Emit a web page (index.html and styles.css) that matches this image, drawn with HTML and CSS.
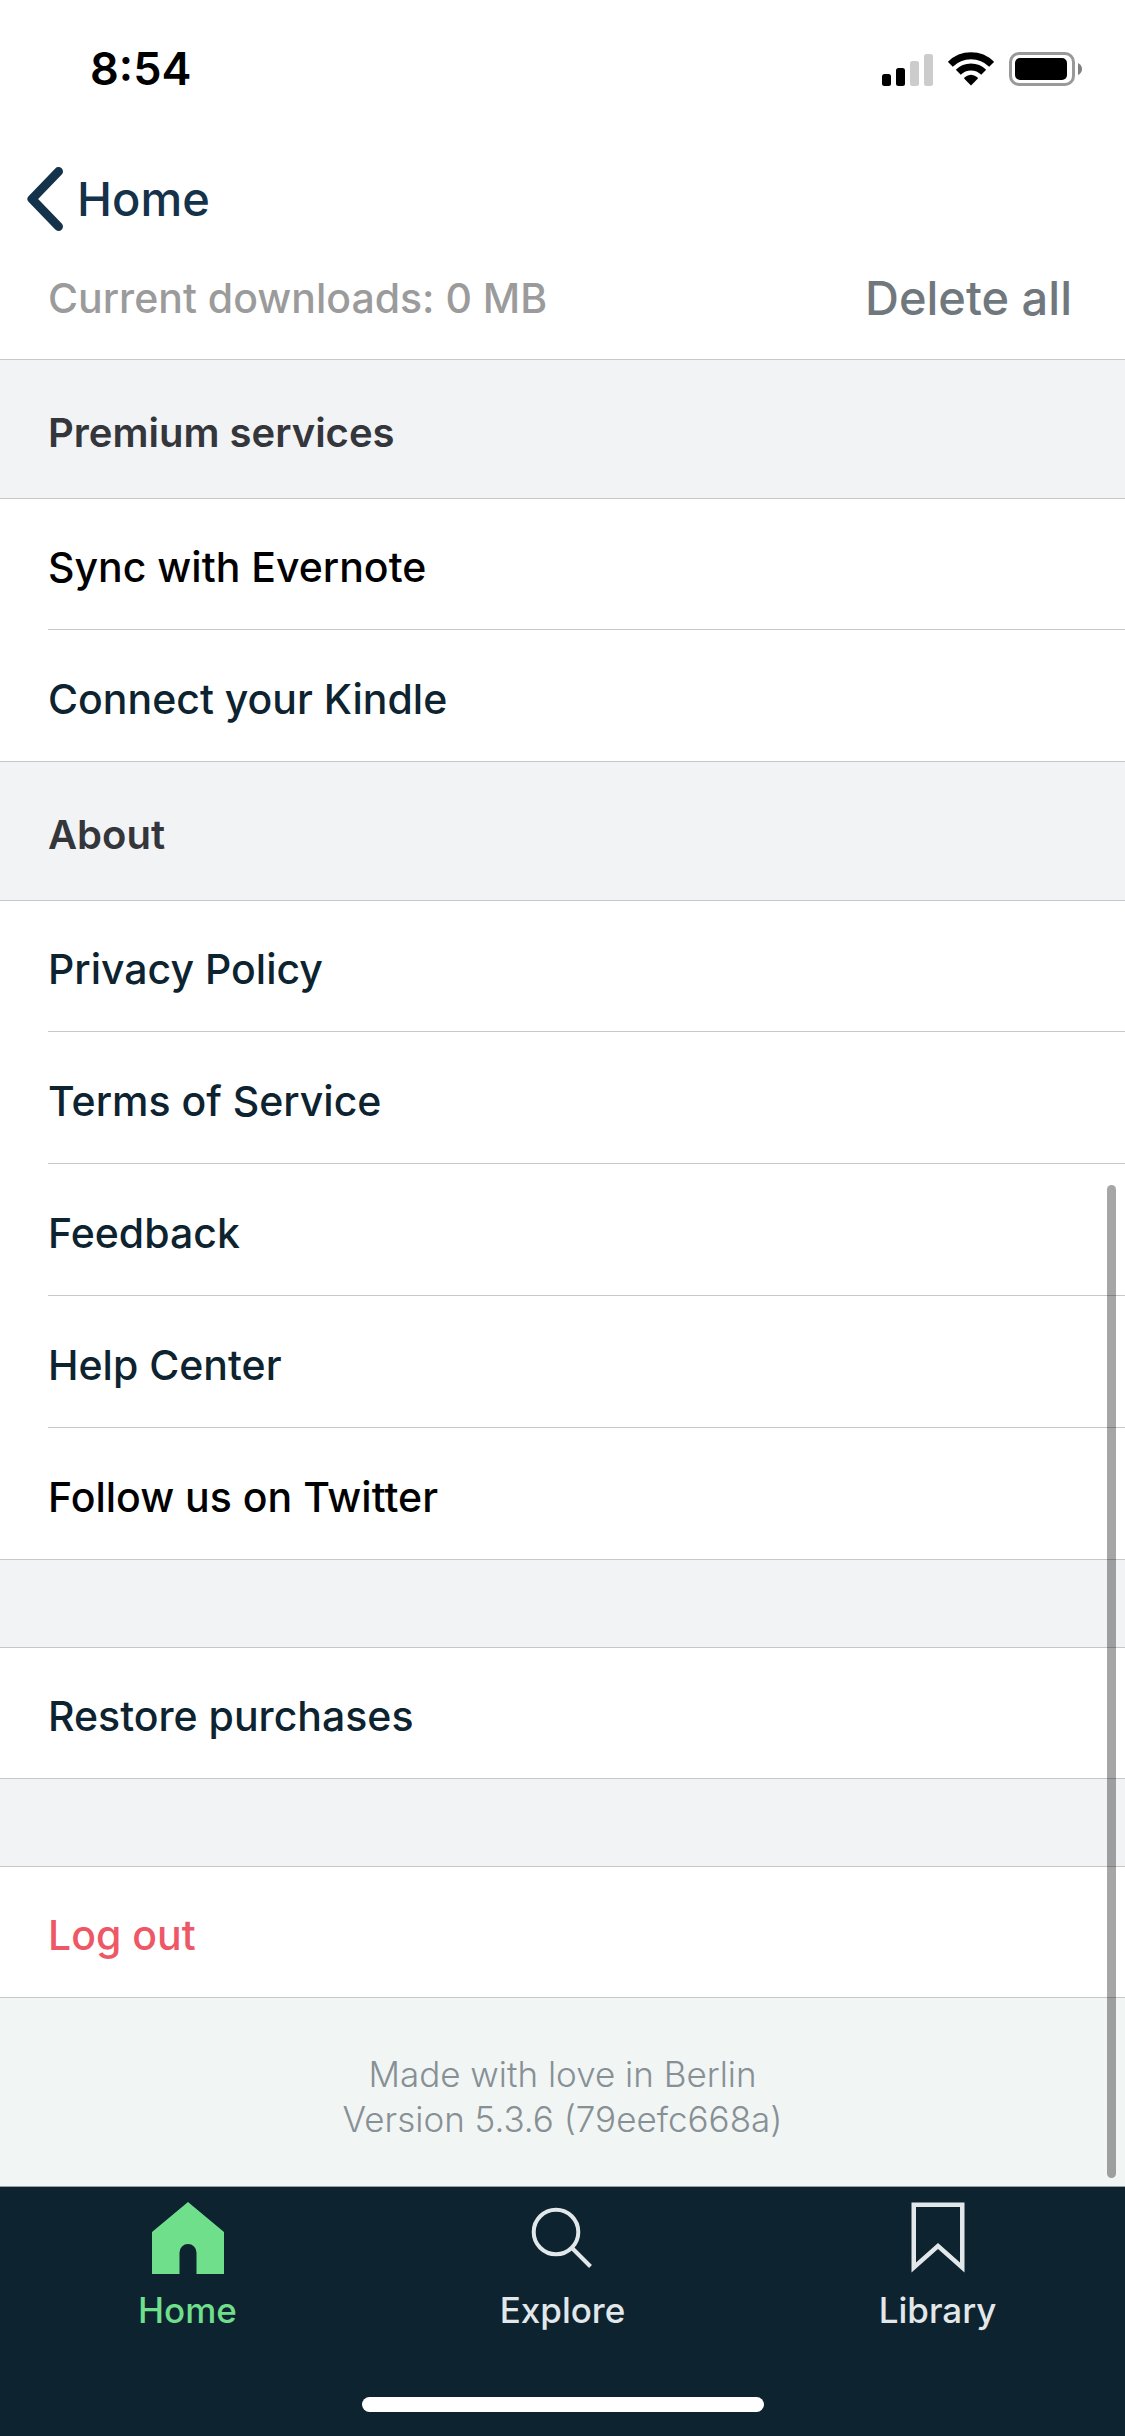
FILE: index.html
```html
<!DOCTYPE html>
<html lang="en">
<head>
  <meta charset="utf-8">
  <meta name="viewport" content="width=device-width, initial-scale=1">
  <title>Settings</title>
  <link rel="stylesheet" href="styles.css">
</head>
<body>
  <div class="status-bar">
    <time class="clock">8:54</time>
    <div class="status-icons">
      <svg class="signal" width="51" height="33" viewBox="0 0 51 33" aria-hidden="true">
        <rect x="0" y="21" width="9" height="12" rx="2.5"/>
        <rect x="14" y="15" width="9" height="18" rx="2.5"/>
        <rect class="dim" x="28" y="8" width="9" height="25" rx="2.5"/>
        <rect class="dim" x="42" y="1" width="9" height="32" rx="2.5"/>
      </svg>
      <svg class="wifi" width="46" height="34" viewBox="0 0 46 34" aria-hidden="true">
        <path class="arc" d="M2.3 12.3A29.3 29.3 0 0 1 43.7 12.3"/>
        <path class="arc" d="M10.3 20.3A18 18 0 0 1 35.7 20.3"/>
        <path d="M23 33.5L16.3 26.8A2 2 0 0 1 16.6 25.2Q23 20.2 29.4 25.2A2 2 0 0 1 29.7 26.8Z"/>
      </svg>
      <svg class="battery" width="74" height="34" viewBox="0 0 74 34" aria-hidden="true">
        <rect class="shell" x="1.5" y="1.5" width="63" height="31" rx="8.5"/>
        <rect x="6" y="6" width="52" height="22" rx="5"/>
        <path class="nub" d="M69 11Q73 13 73 17T69 23Z"/>
      </svg>
    </div>
  </div>

  <header class="nav-bar">
    <a class="back" href="#">
      <svg width="36" height="64" viewBox="0 0 36 64" aria-hidden="true">
        <path d="M31.5 4.5L5 32L31.5 59.5"/>
      </svg>
      Home
    </a>
  </header>

  <main class="settings">
    <div class="downloads">
      <p class="downloads-size">Current downloads: 0 MB</p>
      <button class="delete-all" type="button">Delete all</button>
    </div>

    <h2 class="section-title">Premium services</h2>
    <ul class="group">
      <li><a class="row external" href="#">Sync with Evernote</a></li>
      <li><a class="row" href="#">Connect your Kindle</a></li>
    </ul>

    <h2 class="section-title">About</h2>
    <ul class="group">
      <li><a class="row" href="#">Privacy Policy</a></li>
      <li><a class="row" href="#">Terms of Service</a></li>
      <li><a class="row" href="#">Feedback</a></li>
      <li><a class="row" href="#">Help Center</a></li>
      <li><a class="row external" href="#">Follow us on Twitter</a></li>
    </ul>

    <ul class="group spaced">
      <li><button class="row" type="button">Restore purchases</button></li>
    </ul>

    <ul class="group spaced">
      <li><button class="row danger" type="button">Log out</button></li>
    </ul>

    <footer class="about-app">
      <p>Made with love in Berlin</p>
      <p>Version 5.3.6 (79eefc668a)</p>
    </footer>

    <div class="scroll-thumb"></div>
  </main>

  <nav class="tab-bar">
    <div class="tabs">
      <a class="tab active" href="#" aria-current="page">
        <svg width="72" height="72" viewBox="0 0 72 72" aria-hidden="true">
          <path d="M36 0L72 30V72H44.5V50.500A8.5 8.5 0 0 0 27.5 50.500V72H0V30Z"/>
        </svg>
        Home
      </a>
      <a class="tab" href="#">
        <svg class="outline" width="72" height="72" viewBox="0 0 72 72" aria-hidden="true">
          <circle cx="29" cy="30" r="22.300"/>
          <path d="M45 46L63.500 64.500"/>
        </svg>
        Explore
      </a>
      <a class="tab" href="#">
        <svg width="72" height="72" viewBox="0 0 72 72" aria-hidden="true">
          <path fill-rule="evenodd" d="M9.500 .5H62.500V70.500L36 47L9.500 70.500ZM14 5V60.500L36 41L58 60.500V5Z"/>
        </svg>
        Library
      </a>
    </div>
    <div class="home-indicator"></div>
  </nav>
</body>
</html>
```

FILE: styles.css
```css
* {
  box-sizing: border-box;
  margin: 0;
  padding: 0;
}

:root {
  --line: #c6c7c8;
  --ink: #0d2330;
  --gutter: 48px;
}

body {
  display: flex;
  flex-direction: column;
  min-height: 100vh;
  background: #fff;
  color: var(--ink);
  font-family: Inter, "Liberation Sans", sans-serif;
  font-size: 41px;
  font-weight: 500;
  line-height: 60px;
}

a {
  color: inherit;
  text-decoration: none;
}

button {
  border: 0;
  background: none;
  color: inherit;
  font: inherit;
  text-align: left;
  cursor: pointer;
}

ul {
  list-style: none;
}

/* Status bar */

.status-bar {
  display: flex;
  align-items: center;
  justify-content: space-between;
  height: 132px;
  padding: 6px 42px 0 90px;
  color: #000;
}

.clock {
  font-size: 45px;
  font-weight: 600;
}

.status-icons {
  display: flex;
  align-items: center;
  gap: 15px;
}

.signal .dim {
  fill: #ccc;
}

.wifi .arc {
  fill: none;
  stroke: #000;
  stroke-width: 7;
}

.battery .shell {
  fill: none;
  stroke: #999;
  stroke-width: 3;
}

.battery .nub {
  fill: #808080;
}

/* Navigation bar */

.nav-bar {
  display: flex;
  align-items: center;
  height: 132px;
  padding: 2px 27px 0;
}

.back {
  display: flex;
  align-items: center;
  gap: 14px;
  color: #14324a;
  font-size: 47px;
}

.back path {
  fill: none;
  stroke: #14324a;
  stroke-width: 9;
  stroke-linecap: round;
  stroke-linejoin: round;
}

/* Settings list */

.settings {
  position: relative;
  display: flex;
  flex: 1;
  flex-direction: column;
  background: #f1f3f5;
}

.downloads {
  display: flex;
  align-items: center;
  justify-content: space-between;
  padding: 4px 53px 31px var(--gutter);
  border-bottom: 1px solid var(--line);
  background: #fff;
}

.downloads-size {
  color: #9b9b9b;
}

.delete-all {
  color: #70787e;
  font-size: 47px;
}

.section-title {
  padding: 43px var(--gutter) 35px;
  color: #34363b;
  font-size: 40px;
  font-weight: 600;
}

.group {
  border-top: 1px solid var(--line);
  border-bottom: 1px solid var(--line);
  background: #fff;
}

.group.spaced {
  margin-top: 87px;
}

.group li + li {
  margin-left: var(--gutter);
  border-top: 1px solid var(--line);
}

.group li + li .row {
  min-height: 131px;
  padding-left: 0;
}

.row {
  display: flex;
  align-items: center;
  width: 100%;
  min-height: 130px;
  padding: 6px var(--gutter) 0;
}

.row.external {
  color: #000;
}

.row.danger {
  color: #ee5766;
}

.about-app {
  flex: 1;
  padding: 54px var(--gutter) 44px;
  background: #f1f5f4;
  color: #879095;
  font-size: 35px;
  font-weight: 300;
  line-height: 45px;
  text-align: center;
}

.scroll-thumb {
  position: absolute;
  right: 9px;
  bottom: 8px;
  width: 9px;
  height: 993px;
  border-radius: 5px;
  background: rgba(0, 0, 0, 0.35);
}

/* Tab bar */

.tab-bar {
  display: flex;
  flex-direction: column;
  align-items: center;
  gap: 65px;
  padding: 15px 0 24px;
  border-top: 1px solid #98a0a3;
  background: #0d2330;
}

.tabs {
  display: grid;
  grid-template-columns: repeat(3, 1fr);
  width: 100%;
}

.tab {
  display: flex;
  flex-direction: column;
  align-items: center;
  gap: 14px;
  color: #e2e7ea;
  font-size: 35px;
  line-height: 44px;
}

.tab.active {
  color: #6fdf8b;
}

.tab svg {
  fill: currentColor;
}

.tab .outline {
  fill: none;
  stroke: currentColor;
  stroke-width: 4;
}

.home-indicator {
  width: 402px;
  height: 15px;
  border-radius: 8px;
  background: #fff;
}
```
